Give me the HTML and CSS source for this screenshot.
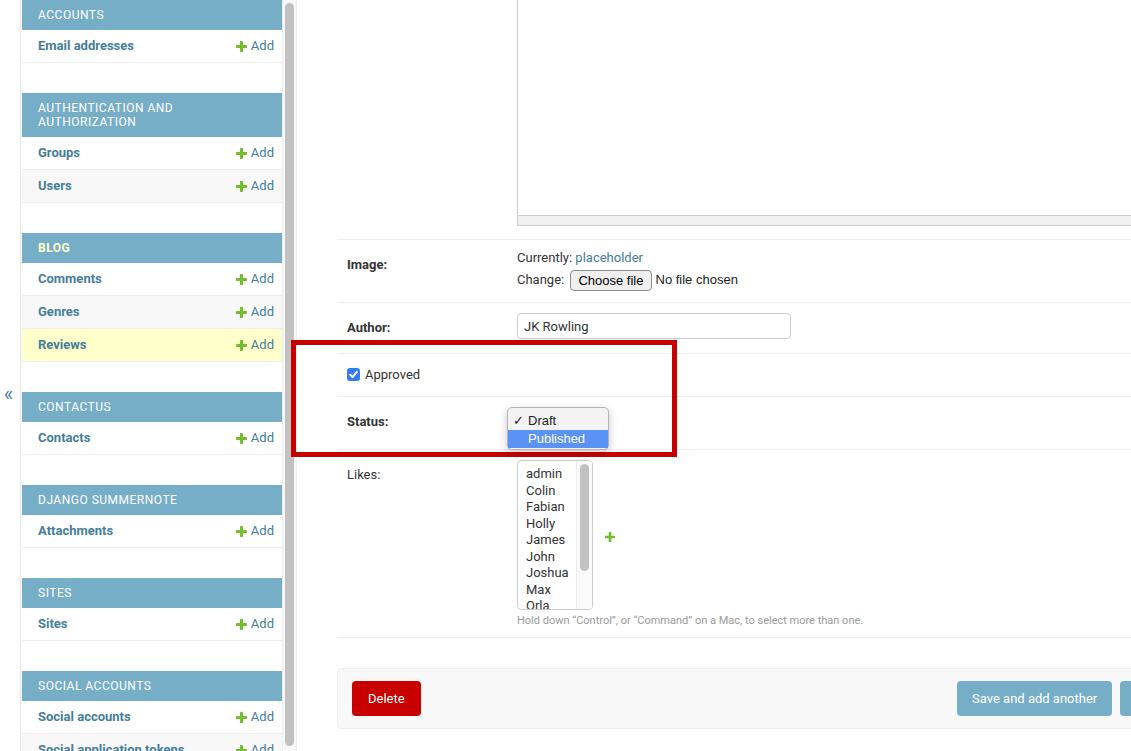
FILE: index.html
```html
<!DOCTYPE html>
<html lang="en">
<head>
<meta charset="utf-8">
<title>Change review | Django site admin</title>
<link rel="stylesheet" href="styles.css">
</head>
<body>
<div class="page">
  <div class="toggle">«</div>

  <nav class="sidebar">
    <div class="modules">
      <section class="module">
        <h2 class="module-title">Accounts</h2>
        <div class="model-row"><a class="model-name" href="#">Email addresses</a><a class="add-link" href="#"><svg class="plus" viewBox="190 186 1412 1412"><path d="M1600 796v192q0 40-28 68t-68 28h-416v416q0 40-28 68t-68 28h-192q-40 0-68-28t-28-68v-416h-416q-40 0-68-28t-28-68v-192q0-40 28-68t68-28h416v-416q0-40 28-68t68-28h192q40 0 68 28t28 68v416h416q40 0 68 28t28 68z"/></svg>Add</a></div>
      </section>
      <section class="module">
        <h2 class="module-title">Authentication and<br>Authorization</h2>
        <div class="model-row"><a class="model-name" href="#">Groups</a><a class="add-link" href="#"><svg class="plus" viewBox="190 186 1412 1412"><path d="M1600 796v192q0 40-28 68t-68 28h-416v416q0 40-28 68t-68 28h-192q-40 0-68-28t-28-68v-416h-416q-40 0-68-28t-28-68v-192q0-40 28-68t68-28h416v-416q0-40 28-68t68-28h192q40 0 68 28t28 68v416h416q40 0 68 28t28 68z"/></svg>Add</a></div>
        <div class="model-row alt"><a class="model-name" href="#">Users</a><a class="add-link" href="#"><svg class="plus" viewBox="190 186 1412 1412"><path d="M1600 796v192q0 40-28 68t-68 28h-416v416q0 40-28 68t-68 28h-192q-40 0-68-28t-28-68v-416h-416q-40 0-68-28t-28-68v-192q0-40 28-68t68-28h416v-416q0-40 28-68t68-28h192q40 0 68 28t28 68v416h416q40 0 68 28t28 68z"/></svg>Add</a></div>
      </section>
      <section class="module current-app">
        <h2 class="module-title">Blog</h2>
        <div class="model-row"><a class="model-name" href="#">Comments</a><a class="add-link" href="#"><svg class="plus" viewBox="190 186 1412 1412"><path d="M1600 796v192q0 40-28 68t-68 28h-416v416q0 40-28 68t-68 28h-192q-40 0-68-28t-28-68v-416h-416q-40 0-68-28t-28-68v-192q0-40 28-68t68-28h416v-416q0-40 28-68t68-28h192q40 0 68 28t28 68v416h416q40 0 68 28t28 68z"/></svg>Add</a></div>
        <div class="model-row alt"><a class="model-name" href="#">Genres</a><a class="add-link" href="#"><svg class="plus" viewBox="190 186 1412 1412"><path d="M1600 796v192q0 40-28 68t-68 28h-416v416q0 40-28 68t-68 28h-192q-40 0-68-28t-28-68v-416h-416q-40 0-68-28t-28-68v-192q0-40 28-68t68-28h416v-416q0-40 28-68t68-28h192q40 0 68 28t28 68v416h416q40 0 68 28t28 68z"/></svg>Add</a></div>
        <div class="model-row current"><a class="model-name" href="#">Reviews</a><a class="add-link" href="#"><svg class="plus" viewBox="190 186 1412 1412"><path d="M1600 796v192q0 40-28 68t-68 28h-416v416q0 40-28 68t-68 28h-192q-40 0-68-28t-28-68v-416h-416q-40 0-68-28t-28-68v-192q0-40 28-68t68-28h416v-416q0-40 28-68t68-28h192q40 0 68 28t28 68v416h416q40 0 68 28t28 68z"/></svg>Add</a></div>
      </section>
      <section class="module">
        <h2 class="module-title">Contactus</h2>
        <div class="model-row"><a class="model-name" href="#">Contacts</a><a class="add-link" href="#"><svg class="plus" viewBox="190 186 1412 1412"><path d="M1600 796v192q0 40-28 68t-68 28h-416v416q0 40-28 68t-68 28h-192q-40 0-68-28t-28-68v-416h-416q-40 0-68-28t-28-68v-192q0-40 28-68t68-28h416v-416q0-40 28-68t68-28h192q40 0 68 28t28 68v416h416q40 0 68 28t28 68z"/></svg>Add</a></div>
      </section>
      <section class="module">
        <h2 class="module-title">Django Summernote</h2>
        <div class="model-row"><a class="model-name" href="#">Attachments</a><a class="add-link" href="#"><svg class="plus" viewBox="190 186 1412 1412"><path d="M1600 796v192q0 40-28 68t-68 28h-416v416q0 40-28 68t-68 28h-192q-40 0-68-28t-28-68v-416h-416q-40 0-68-28t-28-68v-192q0-40 28-68t68-28h416v-416q0-40 28-68t68-28h192q40 0 68 28t28 68v416h416q40 0 68 28t28 68z"/></svg>Add</a></div>
      </section>
      <section class="module">
        <h2 class="module-title">Sites</h2>
        <div class="model-row"><a class="model-name" href="#">Sites</a><a class="add-link" href="#"><svg class="plus" viewBox="190 186 1412 1412"><path d="M1600 796v192q0 40-28 68t-68 28h-416v416q0 40-28 68t-68 28h-192q-40 0-68-28t-28-68v-416h-416q-40 0-68-28t-28-68v-192q0-40 28-68t68-28h416v-416q0-40 28-68t68-28h192q40 0 68 28t28 68v416h416q40 0 68 28t28 68z"/></svg>Add</a></div>
      </section>
      <section class="module">
        <h2 class="module-title">Social Accounts</h2>
        <div class="model-row"><a class="model-name" href="#">Social accounts</a><a class="add-link" href="#"><svg class="plus" viewBox="190 186 1412 1412"><path d="M1600 796v192q0 40-28 68t-68 28h-416v416q0 40-28 68t-68 28h-192q-40 0-68-28t-28-68v-416h-416q-40 0-68-28t-28-68v-192q0-40 28-68t68-28h416v-416q0-40 28-68t68-28h192q40 0 68 28t28 68v416h416q40 0 68 28t28 68z"/></svg>Add</a></div>
        <div class="model-row alt"><a class="model-name" href="#">Social application tokens</a><a class="add-link" href="#"><svg class="plus" viewBox="190 186 1412 1412"><path d="M1600 796v192q0 40-28 68t-68 28h-416v416q0 40-28 68t-68 28h-192q-40 0-68-28t-28-68v-416h-416q-40 0-68-28t-28-68v-192q0-40 28-68t68-28h416v-416q0-40 28-68t68-28h192q40 0 68 28t28 68v416h416q40 0 68 28t28 68z"/></svg>Add</a></div>
      </section>
    </div>
    <div class="sb-track"><div class="sb-thumb"></div></div>
  </nav>

  <main class="main">
    <div class="form">
      <div class="form-row editor-row">
        <label></label>
        <div class="editor">
          <div class="editor-body"></div>
          <div class="editor-status"></div>
        </div>
      </div>

      <div class="form-row">
        <label class="required">Image:</label>
        <div class="file-upload">
          <div class="fu-line">Currently: <a href="#">placeholder</a></div>
          <div class="fu-line change">Change: <span class="file-btn">Choose file</span><span class="no-file">No file chosen</span></div>
        </div>
      </div>

      <div class="form-row author-row">
        <label class="required">Author:</label>
        <div class="text-input">JK Rowling</div>
      </div>

      <div class="highlight-group">
        <div class="form-row">
          <div class="check-row">
            <span class="checkbox"><svg viewBox="0 0 13 13"><path d="M3.2 6.8 L5.5 9.1 L9.9 3.9" fill="none" stroke="#fff" stroke-width="2" stroke-linecap="round" stroke-linejoin="round"/></svg></span>
            <span class="check-label">Approved</span>
          </div>
        </div>

        <div class="form-row">
          <label class="required">Status:</label>
          <div class="status-field">
            <div class="popup">
              <div class="popup-item"><span class="tick">✓</span>Draft</div>
              <div class="popup-item sel"><span class="tick"></span>Published</div>
            </div>
          </div>
        </div>

        <div class="red-box"></div>
      </div>

      <div class="form-row likes-row">
        <label>Likes:</label>
        <div class="likes-field">
          <div class="related">
            <div class="multi">
              <div class="multi-list">
                <div>admin</div>
                <div>Colin</div>
                <div>Fabian</div>
                <div>Holly</div>
                <div>James</div>
                <div>John</div>
                <div>Joshua</div>
                <div>Max</div>
                <div>Orla</div>
              </div>
              <div class="multi-sb"><div class="multi-thumb"></div></div>
            </div>
            <a class="add-related" href="#"><svg class="plus small" viewBox="190 186 1412 1412"><path d="M1600 796v192q0 40-28 68t-68 28h-416v416q0 40-28 68t-68 28h-192q-40 0-68-28t-28-68v-416h-416q-40 0-68-28t-28-68v-192q0-40 28-68t68-28h416v-416q0-40 28-68t68-28h192q40 0 68 28t28 68v416h416q40 0 68 28t28 68z"/></svg></a>
          </div>
          <div class="help">Hold down “Control”, or “Command” on a Mac, to select more than one.</div>
        </div>
      </div>

      <div class="submit-row">
        <a class="btn btn-delete" href="#">Delete</a>
        <div class="btn-group">
          <span class="btn">Save and add another</span>
          <span class="btn">Save and continue editing</span>
          <span class="btn btn-default">Save</span>
        </div>
      </div>
    </div>
  </main>
</div>
</body>
</html>
```

FILE: styles.css
```css
* { box-sizing: border-box; }
html, body { margin: 0; padding: 0; }
body {
  font-family: Roboto, "Liberation Sans", Arial, sans-serif;
  font-size: 14px;
  color: #333;
  background: #fff;
  width: 1131px;
  height: 751px;
  overflow: hidden;
}
a { color: #447e9b; text-decoration: none; }

.page { display: flex; height: 751px; overflow: hidden; }

/* toggle column */
.toggle {
  flex: 0 0 21px;
  border-right: 1px solid #e8e8e8;
  display: flex;
  align-items: center;
  justify-content: center;
  padding: 36px 3px 0 0;
  font-size: 20px;
  line-height: 1;
  color: #447e9b;
}

/* sidebar */
.sidebar {
  flex: 0 0 276px;
  display: flex;
  border-right: 1px solid #eee;
  overflow: hidden;
}
.modules { flex: 0 0 261px; padding-left: 1px; }
.module { margin-bottom: 30px; }
.module-title {
  margin: 0;
  padding: 8px 8px 8px 16px;
  background: #76aec8;
  color: #fff;
  font-size: 12px;
  font-weight: 400;
  line-height: 14px;
  letter-spacing: 0.5px;
  text-transform: uppercase;
}
.current-app .module-title { color: #ffc; font-weight: 700; }
.model-row {
  display: flex;
  justify-content: space-between;
  padding: 8px 8px 8px 16px;
  font-size: 13px;
  line-height: 16px;
  border-bottom: 1px solid #eee;
  white-space: nowrap;
}
.model-row.alt { background: #f8f8f8; }
.model-row.current { background: #ffc; }
.model-name { font-weight: 700; }
.add-link { display: inline-flex; align-items: center; gap: 4px; }
.plus { width: 11px; height: 11px; fill: #70bf2b; display: block; }
.plus.small { width: 10px; height: 10px; }

.sb-track {
  flex: 0 0 14px;
  background: #f8f8f8;
  border-left: 1px solid #ececec;
  padding: 3px 2px 5px 2px;
}
.sb-thumb { height: 100%; background: #c1c1c1; border-radius: 5px; }

/* main */
.main { flex: 0 0 auto; width: 1083px; padding-left: 40px; }
.form { width: 1043px; }
.form-row {
  display: flex;
  padding: 10px;
  border-bottom: 1px solid #eee;
  font-size: 13px;
}
.form-row > label {
  flex: 0 0 170px;
  padding: 7px 10px 0 0;
  line-height: 16px;
}
.required { font-weight: 700; }

.editor-row { padding: 0 10px 13px; }
.editor { flex: 1; border: 1px solid #ccc; border-top: 0; }
.editor-body { height: 215px; background: #fff; }
.editor-status { height: 10px; background: #f0f0f0; border-top: 1px solid #ccc; }

.file-upload { display: flex; flex-direction: column; gap: 3px; min-height: 42px; }
.fu-line { line-height: 16px; }
.fu-line.change { display: flex; align-items: center; height: 22px; white-space: pre; }
.file-btn {
  font-family: "Liberation Sans", Arial, sans-serif;
  font-size: 13px;
  height: 21px;
  line-height: 19px;
  padding: 0 7px;
  border: 1px solid #8e8e8e;
  border-radius: 4px;
  background: #efefef;
  color: #000;
  margin: 0 4px 0 3px;
}
.no-file { font-family: "Liberation Sans", Arial, sans-serif; font-size: 13px; color: #222; }

.author-row { padding: 10px 10px 14px; }
.text-input {
  width: 274px;
  height: 26px;
  border: 1px solid #ccc;
  border-radius: 4px;
  padding: 0 6px;
  line-height: 25px;
  font-size: 13px;
  color: #333;
}

.highlight-group { position: relative; }
.check-row { display: flex; align-items: center; height: 22px; gap: 5px; }
.checkbox {
  width: 13px;
  height: 13px;
  border-radius: 3px;
  background: #2e7cf6;
  display: block;
  margin-top: -2px;
}
.checkbox svg { display: block; width: 13px; height: 13px; }
.check-label { line-height: 22px; }

.status-field { position: relative; flex: 1; height: 32px; }
.popup {
  position: absolute;
  left: -10px;
  top: 0;
  width: 102px;
  padding: 4px 0 1px;
  background: #f3f3f3;
  border: 1px solid #b4b4b4;
  border-radius: 5px;
  box-shadow: 0 3px 8px rgba(0, 0, 0, 0.22);
  font-family: "Liberation Sans", Arial, sans-serif;
  font-size: 13px;
  z-index: 10;
}
.popup-item { display: flex; height: 18px; line-height: 18px; padding-left: 5px; color: #222; }
.popup-item.sel { background: #5a92f5; color: #fff; }
.tick { width: 15px; }

.red-box {
  position: absolute;
  left: -46px;
  top: -14px;
  width: 386px;
  height: 117px;
  border: 5px solid #c80000;
  z-index: 5;
  pointer-events: none;
}

.likes-field { display: flex; flex-direction: column; }
.related { display: flex; align-items: center; }
.multi {
  width: 76px;
  height: 150px;
  border: 1px solid #ccc;
  border-radius: 4px;
  display: flex;
  overflow: hidden;
}
.multi-list {
  flex: 1;
  padding: 5px 0 0 8px;
  line-height: 16.5px;
  font-size: 13px;
  color: #333;
  overflow: hidden;
}
.multi-sb { flex: 0 0 16px; border-left: 1px solid #ececec; padding: 3px 3px 0 3px; background: #fafafa; }
.multi-thumb { height: 107px; background: #c1c1c1; border-radius: 5px; }
.add-related { margin-left: 12px; margin-top: 4px; }
.help { font-size: 11px; color: #999; line-height: 13px; margin-top: 4px; }

.submit-row {
  margin-top: 30px;
  display: flex;
  align-items: center;
  padding: 12px 14px;
  background: #f8f8f8;
  border: 1px solid #eee;
  border-radius: 4px;
}
.btn {
  display: block;
  padding: 10px 15px;
  line-height: 15px;
  font-size: 13px;
  color: #fff;
  border-radius: 4px;
  background: #76aec8;
  white-space: nowrap;
}
.btn-delete { background: #c80000; padding: 10px 16px; }
.btn-default { background: #417690; font-weight: 700; }
.btn-group { margin-left: auto; display: flex; gap: 8px; }
```
